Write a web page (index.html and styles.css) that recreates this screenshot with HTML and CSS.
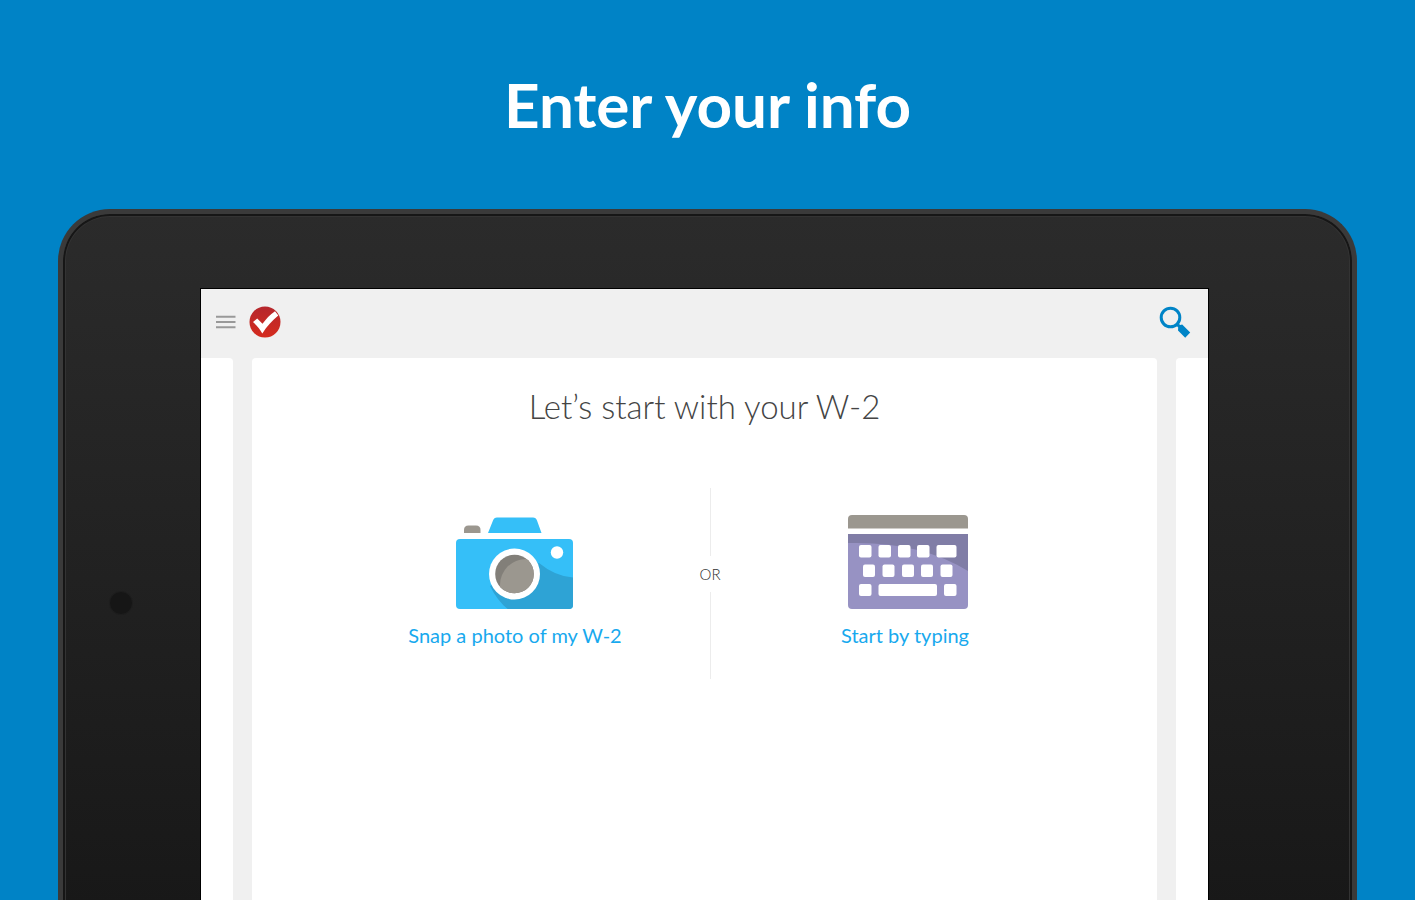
FILE: index.html
```
<!DOCTYPE html>
<html lang="en">

<head>
  <meta charset="UTF-8">
  <meta name="viewport" content="width=device-width, initial-scale=1.0">
  <title>Enter your info</title>
  <link rel="stylesheet" href="styles.css">
</head>

<body>
  <h1 class="headline">Enter your info</h1>

  <div class="tablet">
    <div class="bezel">
      <span class="lens"></span>
    </div>

    <div class="screen">
      <header class="topbar">
        <button class="icon-btn" type="button" aria-label="Menu">
          <svg width="20" height="14" viewBox="0 0 20 14">
            <path d="M0 1.700h19.500M0 7h19.500M0 12.300h19.500" stroke="#999" stroke-width="2" />
          </svg>
        </button>
        <a class="logo" href="#" aria-label="Home">
          <svg width="32" height="32" viewBox="0 0 32 32">
            <defs>
              <linearGradient id="red" x1="0" y1="0" x2="0" y2="1">
                <stop offset="0" stop-color="#b5272d" />
                <stop offset="1" stop-color="#d52b1e" />
              </linearGradient>
            </defs>
            <circle cx="16" cy="16" r="15.500" fill="url(#red)" />
            <path d="M4 16l4.200-3.400 5.300 5.200C16.800 13.500 21 8.500 26 5.300l3.300 4.300C23 14.500 18 20.500 13.300 27.500 11 23 8 19.500 4 16z" fill="#fff" />
          </svg>
        </a>
        <button class="icon-btn search" type="button" aria-label="Search">
          <svg width="32" height="32" viewBox="0 0 32 32">
            <circle cx="11.500" cy="11.500" r="9.300" fill="none" stroke="#0084c7" stroke-width="3" />
            <path d="M17 19l2-2 2.200 2 2-.5 8 8L26.200 31.800 19 24.500l.2-3z" fill="#0084c7" />
          </svg>
        </button>
      </header>

      <div class="pages">
        <div class="page page-prev"></div>
        <main class="page page-current">
          <h2>Let’s start with your W-2</h2>
          <div class="choices">
            <button class="choice" type="button">
              <svg width="126" height="96" viewBox="0 0 126 96">
                <defs>
                  <clipPath id="body"><rect x="4" y="25" width="117" height="70" rx="4" /></clipPath>
                  <clipPath id="glass"><circle cx="62.500" cy="60" r="19.300" /></clipPath>
                </defs>
                <path d="M12 19v-3q0-4.500 4.500-4.500h7.500q4.500 0 4.500 4.500v3z" fill="#9b978f" />
                <path d="M36 19l5-12.500Q42 3.500 45 3.500h36q3 0 4 3L89.500 19z" fill="#35bff8" />
                <g clip-path="url(#body)">
                  <rect x="4" y="25" width="117" height="70" fill="#35bff8" />
                  <path d="M38 72Q46 88 57 96h65V63.500Q104 63 87 49z" fill="#2ea3d5" />
                </g>
                <circle cx="62.500" cy="60" r="25.500" fill="#fff" />
                <g clip-path="url(#glass)">
                  <rect x="43" y="40" width="40" height="40" fill="#827f79" />
                  <circle cx="74" cy="71" r="26" fill="#9b978f" />
                </g>
                <circle cx="105" cy="38.500" r="6.200" fill="#fff" />
              </svg>
              <span>Snap a photo of my W-2</span>
            </button>

            <div class="divider"><span>OR</span></div>

            <button class="choice" type="button">
              <svg width="126" height="96" viewBox="0 0 126 96">
                <defs>
                  <clipPath id="keys"><path d="M6 20h120v71q0 4-4 4H10q-4 0-4-4z" /></clipPath>
                </defs>
                <path d="M6 14.500V5q0-4 4-4h112q4 0 4 4v9.500z" fill="#9b978f" />
                <g clip-path="url(#keys)">
                  <rect x="6" y="20" width="120" height="75" fill="#9792c3" />
                  <path d="M6 20h120v37Q78 27 6 29z" fill="#807da6" />
                </g>
                <g fill="#fff">
                  <rect x="17" y="31" width="12.500" height="12.500" rx="2" />
                  <rect x="36.500" y="31" width="12.500" height="12.500" rx="2" />
                  <rect x="56" y="31" width="12.500" height="12.500" rx="2" />
                  <rect x="75" y="31" width="12.500" height="12.500" rx="2" />
                  <rect x="94.500" y="31" width="20" height="12.500" rx="2" />
                  <rect x="21" y="50.500" width="12" height="12.500" rx="2" />
                  <rect x="40.500" y="50.500" width="12" height="12.500" rx="2" />
                  <rect x="60" y="50.500" width="12" height="12.500" rx="2" />
                  <rect x="79" y="50.500" width="12" height="12.500" rx="2" />
                  <rect x="98.500" y="50.500" width="12" height="12.500" rx="2" />
                  <rect x="17" y="70" width="12.500" height="12" rx="2" />
                  <rect x="36.500" y="70" width="58.500" height="12" rx="2" />
                  <rect x="102" y="70" width="12.500" height="12" rx="2" />
                </g>
              </svg>
              <span>Start by typing</span>
            </button>
          </div>
        </main>
        <div class="page page-next"></div>
      </div>
    </div>

    <div class="bezel bezel-right"></div>
  </div>
</body>

</html>
```
FILE: styles.css
```
* {
  margin: 0;
  box-sizing: border-box;
}

body {
  display: flex;
  flex-direction: column;
  height: 100vh;
  overflow: hidden;
  background: #0083c6;
  font-family: Lato, "Open Sans", sans-serif;
}

button {
  padding: 0;
  border: none;
  background: none;
  font-family: inherit;
  cursor: pointer;
}

svg {
  display: block;
}

.headline {
  height: 209px;
  padding-top: 68px;
  flex-shrink: 0;
  text-align: center;
  color: white;
  font-size: 62px;
  font-weight: bold;
  line-height: 72px;
}

/* runs past the bottom of the window */
.tablet {
  flex: 1;
  display: flex;
  margin: 0 58px -6px;
  padding-top: 75px;
  border: 5px solid #3a3a3a;
  border-bottom: none;
  border-radius: 52px 52px 0 0;
  background: linear-gradient(#2b2b2b, #181818);
  box-shadow: inset 0 0 0 2px #161616, inset 0 0 0 3px #333;
}

.bezel {
  display: flex;
  align-items: center;
  justify-content: center;
  width: 138px;
  flex-shrink: 0;
}

.bezel-right {
  width: 144px;
}

.lens {
  width: 24px;
  height: 24px;
  margin: 10px 22px 0 0;
  border: 1px solid #1e1e1e;
  border-radius: 50%;
  background: #161616;
}

.screen {
  flex: 1;
  display: flex;
  flex-direction: column;
  background: #f0f0f0;
  box-shadow: 0 0 0 1px black;
}

.topbar {
  display: flex;
  align-items: center;
  gap: 13px;
  height: 69px;
  padding: 0 17px 4px 15px;
}

.search {
  margin-left: auto;
}

.pages {
  flex: 1;
  display: flex;
  gap: 19px;
}

.page {
  background: white;
}

.page-prev {
  width: 32px;
  border-radius: 0 4px 0 0;
}

.page-current {
  flex: 1;
  padding-top: 28px;
  border-radius: 4px 4px 0 0;
}

.page-next {
  width: 32px;
  border-radius: 4px 0 0 0;
}

.page-current h2 {
  text-align: center;
  color: #444;
  font-size: 33px;
  font-weight: 300;
  line-height: 40px;
}

.choices {
  display: flex;
  justify-content: center;
  margin-top: 62px;
  padding-left: 11px;
}

.choice {
  display: flex;
  flex-direction: column;
  align-items: center;
  gap: 13px;
  width: 370px;
  padding: 26px 0 32px;
  color: #18a9ee;
  font-size: 20px;
  line-height: 24px;
}

.divider {
  display: flex;
  flex-direction: column;
  align-items: center;
  gap: 8px;
  width: 20px;
  color: #333;
  font-size: 15px;
  font-weight: 300;
  line-height: 20px;
}

.divider::before,
.divider::after {
  content: "";
  flex: 7;
  border-left: 1px solid #ececec;
}

.divider::after {
  flex: 9;
}
```
